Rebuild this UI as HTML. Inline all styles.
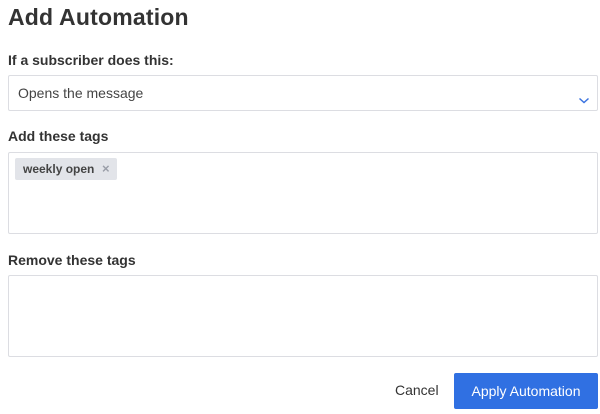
<!DOCTYPE html>
<html><head><style>
body{margin:0;width:600px;height:414px;background:#fff;font-family:"Liberation Sans",Arial,sans-serif;color:#333;position:relative;overflow:hidden}
.a{position:absolute}
h1{position:absolute;left:8px;top:4px;margin:0;font-size:23px;font-weight:bold;color:#333;letter-spacing:0.2px}
.lbl{position:absolute;left:8px;font-size:14px;font-weight:bold;color:#333}
.box{position:absolute;left:8px;width:590px;border:1px solid #dcdde2;border-radius:2px;box-sizing:border-box}
</style></head><body>
<h1>Add Automation</h1>
<div class="lbl" style="top:52px">If a subscriber does this:</div>
<div class="box" style="top:75px;height:36px"><span class="a" style="left:9px;top:9px;font-size:14px;color:#444">Opens the message</span>
<svg class="a" style="left:569px;top:21px" width="12" height="8" viewBox="0 0 12 8"><path d="M1.5 1.5 L6 5.5 L10.5 1.5" fill="none" stroke="#3b73e0" stroke-width="1.5"/></svg></div>
<div class="lbl" style="top:128px">Add these tags</div>
<div class="box" style="top:152px;height:82px">
<div class="a" style="left:6px;top:5px;width:102px;height:22px;background:#e2e4e9;border-radius:2px;font-size:12px;font-weight:bold;color:#444;line-height:22px"><span style="margin-left:8px">weekly open</span><span class="a" style="left:87px;top:0;color:#9a9ea8;font-size:13px">×</span></div>
</div>
<div class="lbl" style="top:252px">Remove these tags</div>
<div class="box" style="top:275px;height:82px"></div>
<div class="a" style="left:395px;top:382px;font-size:14px;color:#333">Cancel</div>
<div class="a" style="left:454px;top:373px;width:144px;height:36px;background:#3070e2;border-radius:2px;color:#fff;font-size:14px;text-align:center;line-height:36px">Apply Automation</div>
</body></html>
